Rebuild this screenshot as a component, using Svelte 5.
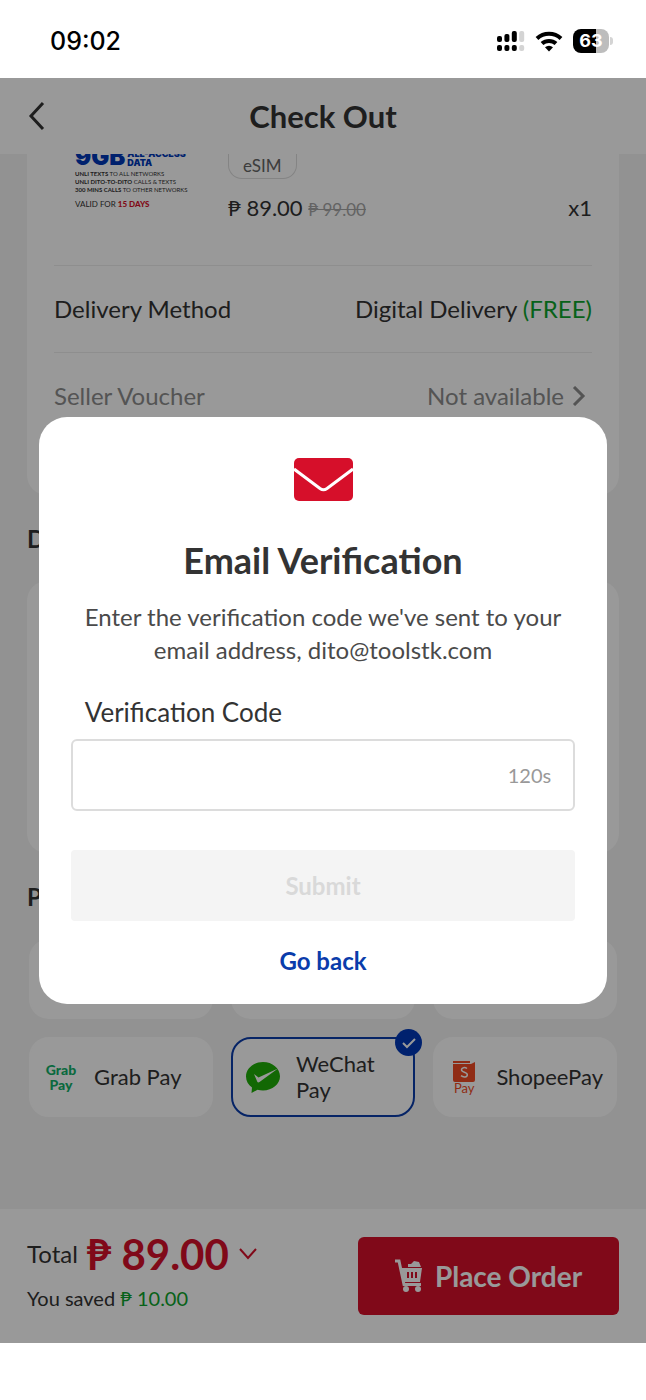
<script lang="ts">
  interface Method {
    id: string;
    label: string;
  }

  const methods: Method[] = [
    { id: 'grab', label: 'Grab Pay' },
    { id: 'wechat', label: 'WeChat Pay' },
    { id: 'shopee', label: 'ShopeePay' }
  ];

  const bars = [0, 1, 2, 3];

  let selected = $state('wechat');
  let code = $state('');
  let seconds = $state(120);
</script>

<div class="phone">
  <div class="status">
    <span class="clock">09:02</span>
    <div class="indicators">
      <svg width="28" height="22" viewBox="0 0 28 22" aria-hidden="true">
        {#each bars as bar}
          <rect
            class:faint={bar === 3}
            x={bar * 7.4}
            y={bar === 0 ? 6 : bar === 1 ? 4 : 1}
            width="5"
            height={bar === 0 ? 6 : bar === 1 ? 8 : 11}
            rx="2"
          />
          <rect class:faint={bar === 3} x={bar * 7.4} y="15" width="5" height="6" rx="2" />
        {/each}
      </svg>
      <svg width="28" height="22" viewBox="0 0 28 22" aria-hidden="true">
        <g fill="none" stroke="#000" stroke-width="4">
          <path d="M2 8.500a17.500 17.500 0 0 1 24 0" />
          <path d="M7 13.600a10.400 10.400 0 0 1 14 0" />
        </g>
        <path d="M14 21.500l-4-4.200a6 6 0 0 1 8 0z" />
      </svg>
      <div class="battery"><span>63</span></div>
    </div>
  </div>

  <div class="screen">
    <header>
      <button class="back" aria-label="Back">
        <svg width="20" height="32" viewBox="0 0 20 32" aria-hidden="true">
          <path d="M17 3L5 16l12 13" fill="none" stroke="#333" stroke-width="3" />
        </svg>
      </button>
      <h1>Check Out</h1>
    </header>

    <main>
      <section class="card order">
        <div class="product">
          <div class="thumb">
            <div class="data"><b>9GB</b><span>ALL-ACCESS<br />DATA</span></div>
            <p><b>UNLI TEXTS</b> TO ALL NETWORKS</p>
            <p><b>UNLI DITO-TO-DITO</b> CALLS &amp; TEXTS</p>
            <p><b>300 MINS CALLS</b> TO OTHER NETWORKS</p>
            <p class="valid">VALID FOR <strong>15 DAYS</strong></p>
          </div>
          <div class="info">
            <span class="tag">eSIM</span>
            <div class="price">
              <span>₱ 89.00 <s>₱ 99.00</s></span>
              <span>x1</span>
            </div>
          </div>
        </div>
        <div class="row">
          <span>Delivery Method</span>
          <span>Digital Delivery <span class="free">(FREE)</span></span>
        </div>
        <div class="row muted">
          <span>Seller Voucher</span>
          <span class="more">
            Not available
            <svg width="14" height="20" viewBox="0 0 14 20" aria-hidden="true">
              <path d="M2 1l9 9-9 9" fill="none" stroke="#8c8c8c" stroke-width="3" />
            </svg>
          </span>
        </div>
      </section>

      <h2>Details</h2>
      <section class="card details"></section>

      <h2>Payment Method</h2>
      <div class="methods">
        <div class="method"></div>
        <div class="method"></div>
        <div class="method"></div>
        {#each methods as method}
          <label class="method" class:active={selected === method.id}>
            <input type="radio" name="method" value={method.id} bind:group={selected} />
            {#if method.id === 'grab'}
              <span class="grab"><span>Grab</span><span>Pay</span></span>
            {:else if method.id === 'wechat'}
              <svg width="36" height="36" viewBox="0 0 36 36" aria-hidden="true">
                <path
                  d="M18 3C8.600 3 1 9.500 1 17.500c0 4.400 2.300 8.300 6 11L6.500 34l6-3.200c1.700.5 3.600.7 5.500.7 9.400 0 17-6.300 17-14.200S27.400 3 18 3z"
                  fill="#1fad08"
                />
                <path d="M9 15l4.500 3.500L33 9.500 14.500 23c-1 .7-1.800.6-2.300-.5z" fill="#fff" />
              </svg>
            {:else}
              <span class="shopee">
                <svg width="24" height="22" viewBox="0 0 24 22" aria-hidden="true">
                  <path d="M1 1h17v2H1zM1 4h18l4-2v18a2 2 0 0 1-2 2H3a2 2 0 0 1-2-2z" fill="#f04a24" />
                  <path
                    d="M15 8.500c-2-1.500-5.500-1-5.500 1.200 0 3 5.800 2 5.800 5 0 2.600-3.800 3-6.300 1"
                    fill="none"
                    stroke="#fff"
                    stroke-width="1.500"
                  />
                </svg>
                Pay
              </span>
            {/if}
            <span class="name">{method.label}</span>
            {#if selected === method.id}
              <span class="check">
                <svg width="14" height="12" viewBox="0 0 14 12" aria-hidden="true">
                  <path d="M1 6l4 4 8-8" fill="none" stroke="#fff" stroke-width="2" />
                </svg>
              </span>
            {/if}
          </label>
        {/each}
      </div>
    </main>

    <footer>
      <div>
        <div class="total">
          Total <strong>₱ 89.00</strong>
          <svg width="20" height="14" viewBox="0 0 20 14" aria-hidden="true">
            <path d="M2 2l8 9 8-9" fill="none" stroke="#d60f2a" stroke-width="2" />
          </svg>
        </div>
        <div class="saved">You saved <span>₱ 10.00</span></div>
      </div>
      <button class="order-button">
        <svg width="28" height="34" viewBox="0 0 28 34" aria-hidden="true">
          <path d="M0 2h4l5 23.500h17" fill="none" stroke="#fff" stroke-width="3" />
          <path d="M6 9h21l-2 14H9z" fill="#fff" />
          <path d="M13 8V5h3l3-3 5 1 2 5z" fill="#fff" />
          <path d="M13 13v6M17 13v6M21 13v6" stroke="#d60f2a" stroke-width="2" />
          <circle cx="11" cy="30" r="3" fill="#fff" />
          <circle cx="23" cy="30" r="3" fill="#fff" />
        </svg>
        Place Order
      </button>
    </footer>

    <div class="overlay">
      <form class="modal" role="dialog" aria-labelledby="modal-title">
        <svg class="mail" width="59" height="43" viewBox="0 0 59 43" aria-hidden="true">
          <rect width="59" height="43" rx="5" fill="#d60f2a" />
          <path
            d="M0 11l26 19.500q3.500 2.500 7 0L59 11"
            fill="none"
            stroke="#fff"
            stroke-width="3"
          />
        </svg>
        <h2 id="modal-title">Email Verification</h2>
        <p>Enter the verification code we've sent to your email address, dito@toolstk.com</p>
        <label class="code-label" for="code">Verification Code</label>
        <div class="field">
          <input id="code" type="text" inputmode="numeric" bind:value={code} />
          <span>{seconds}s</span>
        </div>
        <button type="button" class="submit" disabled={code === ''}>Submit</button>
        <button type="button" class="go-back">Go back</button>
      </form>
    </div>
  </div>
</div>

<style>
  :global(body) {
    background: #fff;
  }
  .phone {
    min-height: 100vh;
    box-sizing: border-box;
    padding-bottom: 57px;
    display: flex;
    flex-direction: column;
    color: #333;
    font-family: Lato, 'Open Sans', sans-serif;
    font-size: 24px;
    line-height: 28px;
  }
  button {
    border: 0;
    padding: 0;
    background: none;
    color: inherit;
    font: inherit;
    cursor: pointer;
  }
  h1,
  h2,
  p {
    margin: 0;
  }
  .status {
    display: flex;
    align-items: center;
    justify-content: space-between;
    height: 78px;
    box-sizing: border-box;
    padding: 4px 37px 0 50px;
    color: #000;
  }
  .clock {
    font-family: Inter, sans-serif;
    font-size: 25px;
    font-weight: 500;
  }
  .indicators {
    display: flex;
    align-items: center;
    gap: 10px;
  }
  .faint {
    fill: #d4d4d4;
  }
  .battery {
    position: relative;
    width: 36px;
    height: 24px;
    border-radius: 8px;
    background: linear-gradient(90deg, #000 63%, #bdbdbd 63%);
    color: #fff;
    font-family: Inter, sans-serif;
    font-size: 18px;
    font-weight: 700;
    line-height: 24px;
    text-align: center;
  }
  .battery::after {
    content: '';
    position: absolute;
    top: 8px;
    right: -4px;
    width: 3px;
    height: 8px;
    border-radius: 0 3px 3px 0;
    background: #d4d4d4;
  }
  .screen {
    position: relative;
    flex: 1;
    display: flex;
    flex-direction: column;
    background: #f4f4f4;
  }
  header {
    display: grid;
    grid-template-columns: 40px 1fr 40px;
    align-items: center;
    height: 76px;
    padding: 0 22px;
    background: #fff;
  }
  .back {
    display: flex;
    padding: 4px;
  }
  h1 {
    font-size: 31px;
    font-weight: 700;
    line-height: 36px;
    text-align: center;
  }
  main {
    flex: 1;
    padding: 0 27px;
    overflow: hidden;
  }
  .card {
    border-radius: 20px;
    background: #fff;
  }
  .order {
    padding: 0 27px 56px;
    border-radius: 0 0 20px 20px;
  }
  .product {
    display: flex;
    gap: 36px;
    height: 111px;
    padding-left: 21px;
    overflow: hidden;
  }
  .thumb {
    width: 117px;
    font-size: 6px;
    line-height: 8px;
    white-space: nowrap;
  }
  .data {
    display: flex;
    align-items: flex-end;
    gap: 2px;
    height: 13px;
    margin-bottom: 3px;
    color: #0038b8;
    font-family: Inter, sans-serif;
    font-weight: 900;
  }
  .data b {
    font-size: 24px;
    font-weight: 900;
    line-height: 20px;
  }
  .data span {
    font-size: 9px;
    line-height: 9px;
  }
  .thumb .valid {
    margin-top: 6px;
    font-size: 8px;
  }
  .valid strong {
    color: #d60f2a;
    font-weight: 900;
  }
  .info {
    flex: 1;
    display: flex;
    flex-direction: column;
    align-items: flex-start;
  }
  .tag {
    padding: 0 14px;
    border: 1px solid #dcdcdc;
    border-top: 0;
    border-radius: 0 0 14px 14px;
    color: #666;
    font-size: 17px;
    line-height: 24px;
  }
  .price {
    display: flex;
    justify-content: space-between;
    align-self: stretch;
    margin-top: 15px;
    font-size: 22px;
  }
  .price s {
    color: #a6a6a6;
    font-size: 17px;
  }
  .row {
    display: flex;
    align-items: center;
    justify-content: space-between;
    height: 86px;
    border-top: 1px solid #ededed;
  }
  .free {
    color: #0da32c;
  }
  .muted {
    color: #8c8c8c;
  }
  .more {
    display: flex;
    align-items: center;
    gap: 8px;
    padding-right: 6px;
  }
  main h2 {
    margin: 30px 0 28px;
    font-size: 24px;
    font-weight: 700;
    line-height: 28px;
  }
  .details {
    height: 272px;
  }
  .methods {
    display: grid;
    grid-template-columns: repeat(3, minmax(0, 1fr));
    gap: 18px;
    padding: 0 2px;
  }
  .method {
    position: relative;
    display: flex;
    align-items: center;
    gap: 15px;
    height: 80px;
    box-sizing: border-box;
    padding: 0 12px;
    border: 2px solid #fff;
    border-radius: 20px;
    background: #fff;
    line-height: 26px;
  }
  .method input {
    position: absolute;
    opacity: 0;
  }
  .active {
    border-color: #0a3cab;
  }
  .name {
    flex: 1;
    font-size: 22px;
  }
  .grab {
    display: flex;
    flex-direction: column;
    align-items: center;
    width: 36px;
    color: #12b06a;
    font-size: 14px;
    font-weight: 900;
    line-height: 15px;
  }
  .shopee {
    display: flex;
    flex-direction: column;
    align-items: center;
    width: 36px;
    color: #f04a24;
    font-size: 13px;
    line-height: 13px;
  }
  .check {
    position: absolute;
    top: -10px;
    right: -9px;
    display: flex;
    align-items: center;
    justify-content: center;
    width: 27px;
    height: 27px;
    border-radius: 50%;
    background: #0038b8;
  }
  footer {
    display: flex;
    align-items: center;
    justify-content: space-between;
    height: 134px;
    padding: 0 27px;
    background: #fff;
  }
  .total {
    display: flex;
    align-items: center;
    gap: 9px;
    font-size: 24px;
    line-height: 40px;
  }
  .total strong {
    color: #d60f2a;
    font-size: 42px;
  }
  .saved {
    margin: 10px 0 6px;
    font-size: 20px;
  }
  .saved span {
    color: #0da32c;
  }
  .order-button {
    display: flex;
    align-items: center;
    justify-content: center;
    gap: 12px;
    width: 261px;
    height: 78px;
    border-radius: 6px;
    background: #d60f2a;
    color: #fff;
    font-size: 28px;
    font-weight: 700;
  }
  .overlay {
    position: absolute;
    inset: 0;
    display: flex;
    align-items: center;
    justify-content: center;
    background: rgba(0, 0, 0, 0.4);
  }
  .modal {
    display: flex;
    flex-direction: column;
    width: 88%;
    box-sizing: border-box;
    padding: 41px 32px 29px;
    border-radius: 28px;
    background: #fff;
  }
  .mail {
    align-self: center;
  }
  .modal h2 {
    margin: 39px 0 20px;
    font-size: 36px;
    font-weight: 700;
    line-height: 40px;
    text-align: center;
  }
  .modal p {
    color: #4a4a4a;
    line-height: 33px;
    text-align: center;
  }
  .code-label {
    margin: 32px 14px 13px;
    font-size: 26px;
  }
  .field {
    display: flex;
    align-items: center;
    height: 72px;
    box-sizing: border-box;
    padding: 0 22px;
    border: 2px solid #dcdcdc;
    border-radius: 6px;
  }
  .field input {
    flex: 1;
    min-width: 0;
    border: 0;
    outline: 0;
    background: none;
    color: inherit;
    font: inherit;
  }
  .field span {
    color: #999;
    font-size: 20px;
  }
  .submit {
    height: 71px;
    margin: 39px 0 26px;
    border-radius: 4px;
    background: #f4f4f4;
    font-weight: 700;
  }
  .submit:disabled {
    color: #d9d9d9;
  }
  .go-back {
    align-self: center;
    color: #0a3cab;
    font-weight: 700;
  }
</style>
